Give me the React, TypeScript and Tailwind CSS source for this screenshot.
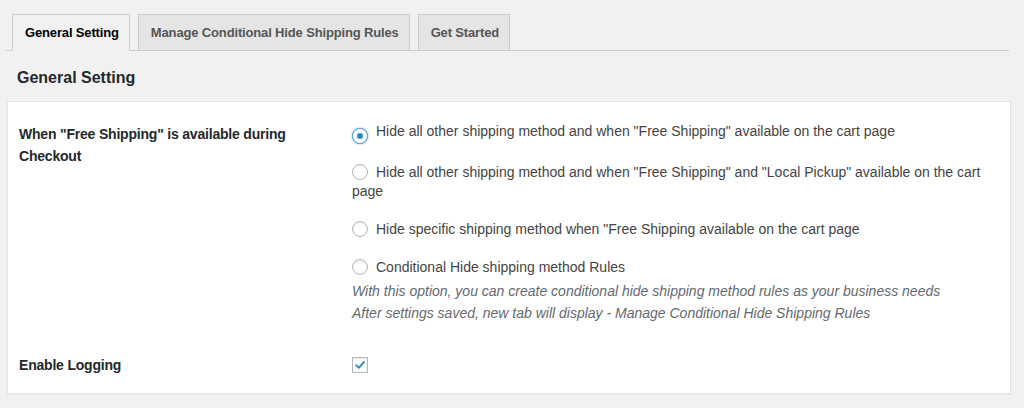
const options = [
  'Hide all other shipping method and when "Free Shipping" available on the cart page',
  'Hide all other shipping method and when "Free Shipping" and "Local Pickup" available on the cart page',
  'Hide specific shipping method when "Free Shipping available on the cart page',
  "Conditional Hide shipping method Rules",
];

const tabs = ["General Setting", "Manage Conditional Hide Shipping Rules", "Get Started"];

function Radio({ checked }: { checked?: boolean }) {
  return (
    <span
      className={`mr-[8px] inline-flex h-4 w-4 items-center justify-center rounded-full border bg-white align-[-3px] ${
        checked
          ? "border-[#5b9dd9] shadow-[0_0_2px_rgba(30,140,190,0.8)]"
          : "border-[#b4b9be] shadow-[inset_0_1px_2px_rgba(0,0,0,0.1)]"
      }`}
    >
      {checked && <span className="h-[6px] w-[6px] rounded-full bg-[#1e8cbe]" />}
    </span>
  );
}

export default function App() {
  return (
    <div
      className="min-h-screen bg-[#f1f1f1] pl-[5px] pr-[13px] pt-[14px] text-[#23282d]"
      style={{ fontFamily: '"Liberation Sans", Arial, sans-serif' }}
    >
      {/* Tabs */}
      <div className="mr-[2px] flex gap-2 border-b border-[#ccc] pl-[7px]">
        {tabs.map((t, i) => (
          <div
            key={t}
            className={`-mb-px flex h-[37px] items-center border border-[#ccc] pl-[12px] pr-[10px] text-[13px] font-bold tracking-[-0.15px] ${
              i === 0 ? "border-b-[#f1f1f1] bg-[#f1f1f1] text-black" : "bg-[#e5e5e5] text-[#555]"
            }`}
          >
            {t}
          </div>
        ))}
      </div>

      {/* Heading */}
      <h2 className="mt-[16px] pl-[12px] text-[16px] font-bold leading-[22px] text-[#23282d]">General Setting</h2>

      {/* Panel */}
      <div className="ml-[2px] mt-[12px] border border-[#e5e5e5] bg-white pb-[17px] pl-[11px] pr-[20px] pt-[20px] shadow-[0_1px_1px_rgba(0,0,0,0.04)]">
        <div className="grid grid-cols-[333px_1fr] gap-y-[30px]">
          <div className="pt-[1px] text-[14px] font-bold leading-[22px] tracking-[-0.2px] text-[#23282d]">
            When "Free Shipping" is available during
            <br />
            Checkout
          </div>
          <div className="flex flex-col gap-[19px] text-[14px] leading-[19px] text-[#444]">
            {options.slice(0, 3).map((o, i) => (
              <label key={o} className="block">
                <Radio checked={i === 0} />
                {o}
              </label>
            ))}
            <div>
              <label className="block">
                <Radio />
                {options[3]}
              </label>
              <p className="mt-[3px] text-[14px] italic leading-[22px] text-[#646970]">
                With this option, you can create conditional hide shipping method rules as your business needs
                <br />
                After settings saved, new tab will display - Manage Conditional Hide Shipping Rules
              </p>
            </div>
          </div>

          <div className="text-[14px] font-bold leading-[22px] tracking-[-0.2px] text-[#23282d]">Enable Logging</div>
          <div className="flex h-[22px] items-center">
            <span className="flex h-4 w-4 items-center justify-center border border-[#b4b9be] bg-white shadow-[inset_0_1px_2px_rgba(0,0,0,0.1)]">
              <svg viewBox="0 0 16 16" className="h-[14px] w-[14px]">
                <path d="M3.5 8.2 L6.6 11.2 L12.6 4.4" fill="none" stroke="#1e8cbe" strokeWidth="2" strokeLinecap="round" strokeLinejoin="round" />
              </svg>
            </span>
          </div>
        </div>
      </div>
    </div>
  );
}
